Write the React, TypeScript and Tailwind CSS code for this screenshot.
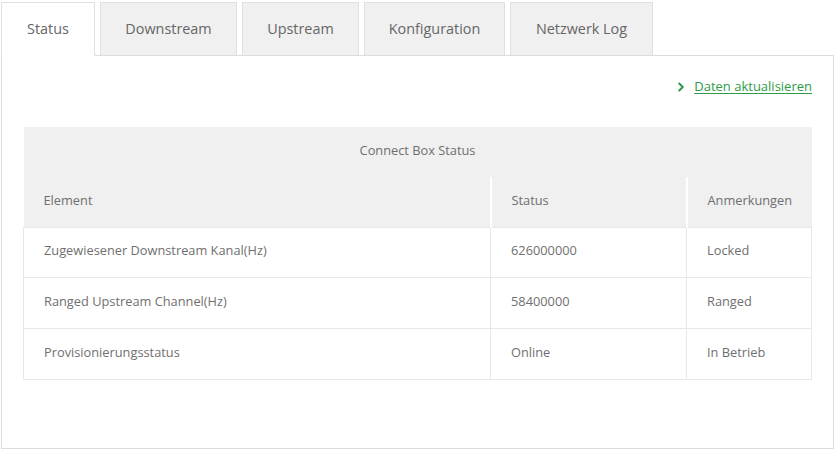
import { ChevronRight } from "lucide-react";

const tabs = ["Status", "Downstream", "Upstream", "Konfiguration", "Netzwerk Log"];
const tabWidths = ["w-[94px]", "w-[137px]", "w-[117px]", "w-[141px]", "w-[143px]"];

const rows = [
  ["Zugewiesener Downstream Kanal(Hz)", "626000000", "Locked"],
  ["Ranged Upstream Channel(Hz)", "58400000", "Ranged"],
  ["Provisionierungsstatus", "Online", "In Betrieb"],
];

export default function App() {
  return (
    <div className="w-[834px] h-[449px] bg-white pt-[2px] pl-[1px] font-['Open_Sans',sans-serif] text-[#666]">
      <div className="flex items-end gap-[5px]">
        {tabs.map((t, i) => (
          <div
            key={t}
            className={`${tabWidths[i]} flex items-center justify-center text-[14.4px] border border-[#e0e0e0] ${
              i === 0
                ? "bg-white border-b-white relative z-10 -mb-px h-[54px]"
                : "bg-[#f0f0f0] border-b-0 h-[53px]"
            }`}
          >
            {t}
          </div>
        ))}
      </div>
      <div className="w-[833px] h-[394px] border border-[#dcdcdc] px-[21px]">
        <div className="flex justify-end h-[71px] pt-[21px]">
          <a href="#" className="flex items-center h-[20px] gap-[6px] text-[13px] text-[#2e9b4a] underline underline-offset-2">
            <ChevronRight size={14} strokeWidth={3.5} className="text-[#2e9b4a]" />
            Daten aktualisieren
          </a>
        </div>
        <table className="w-[789px] border-collapse text-[12.8px] text-[#6f6f6f]">
          <thead>
            <tr className="h-[50px] bg-[#f0f0f0]">
              <th colSpan={3} className="font-normal text-center pb-[2px]">Connect Box Status</th>
            </tr>
            <tr className="h-[50px] bg-[#f0f0f0]">
              <th className="font-normal text-left pl-[20px] w-[467px] pb-[2px]">Element</th>
              <th className="font-normal text-left pl-[20px] w-[196px] border-l-2 border-white pb-[2px]">Status</th>
              <th className="font-normal text-left pl-[20px] border-l-2 border-white pb-[2px]">Anmerkungen</th>
            </tr>
          </thead>
          <tbody>
            {rows.map((r, i) => (
              <tr key={r[0]} className={i === 0 ? "h-[50px]" : "h-[51px]"}>
                <td className="pl-[20px] pb-[2px] border border-[#e8e8e8]">{r[0]}</td>
                <td className="pl-[20px] pb-[2px] border border-[#e8e8e8]">{r[1]}</td>
                <td className="pl-[20px] pb-[2px] border border-[#e8e8e8]">{r[2]}</td>
              </tr>
            ))}
          </tbody>
        </table>
      </div>
    </div>
  );
}
